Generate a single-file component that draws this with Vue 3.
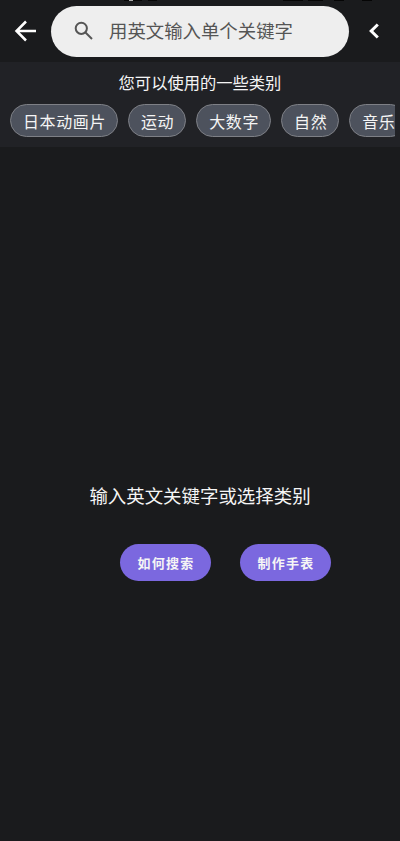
<script setup>
const categories = ['日本动画片', '运动', '大数字', '自然', '音乐']
</script>

<template>
  <div class="screen">
    <header class="topbar">
      <svg class="status-edge" width="400" height="2" viewBox="0 0 400 2">
        <path class="dark" d="M124 .5h18M148 .5h9M283 .5h20M308 .5h15M334 .5h10M362 .5h10" />
        <path class="light" d="M129 .5h4" />
      </svg>
      <button class="icon-btn back" aria-label="返回">
        <svg width="24" height="24" viewBox="0 0 24 24"><path d="M22 12H3M12 2.5L2.500 12l9.500 9.500" /></svg>
      </button>
      <div class="search">
        <svg width="20" height="20" viewBox="0 0 20 20"><circle cx="7.300" cy="7.300" r="5.600" /><path d="M11.500 11.500l6.500 6.500" /></svg>
        <span>用英文输入单个关键字</span>
      </div>
      <button class="icon-btn more" aria-label="展开">
        <svg width="12" height="18" viewBox="0 0 12 18"><path d="M9.800 2.500L3.200 9l6.600 6.500" /></svg>
      </button>
    </header>
    <section class="categories">
      <h2>您可以使用的一些类别</h2>
      <div class="chips">
        <button v-for="c in categories" :key="c" class="chip">{{ c }}</button>
      </div>
    </section>
    <main class="empty">
      <p>输入英文关键字或选择类别</p>
      <div class="actions">
        <button>如何搜索</button>
        <button>制作手表</button>
      </div>
    </main>
  </div>
</template>

<style>
body {
  background: #1a1b1d;
}
</style>

<style scoped>
.screen {
  width: 400px;
  height: 841px;
  overflow: hidden;
  display: flex;
  flex-direction: column;
  background: #1a1b1d;
  color: #f5f5f5;
  font-family: "Noto Sans CJK SC", sans-serif;
}
button {
  font: inherit;
  color: inherit;
  border: 0;
  margin: 0;
  padding: 0;
  background: none;
  white-space: nowrap;
  flex: none;
}
svg {
  display: block;
  flex: none;
  fill: none;
  stroke: currentColor;
}
.topbar {
  position: relative;
  height: 62px;
  flex: none;
  display: flex;
  align-items: center;
}
/* Lower edge of the system status bar, showing above the app bar */
.status-edge {
  position: absolute;
  top: 0;
  left: 0;
}
.dark {
  stroke: #050505;
}
.light {
  stroke: #aaa;
}
.icon-btn {
  display: flex;
  justify-content: center;
  color: #fff;
}
.back {
  width: 51px;
  stroke-width: 2.5;
}
.more {
  width: 49px;
  stroke-width: 3;
}
.search {
  width: 298px;
  height: 51px;
  box-sizing: border-box;
  padding-left: 23px;
  display: flex;
  align-items: center;
  gap: 15px;
  border-radius: 26px;
  background: #eee;
  color: #555;
}
.search svg {
  stroke-width: 2;
}
.search span {
  font-size: 18.400px;
  line-height: 28px;
  padding-bottom: 2px;
}
.categories {
  height: 85px;
  flex: none;
  box-sizing: border-box;
  padding: 8px 5px 0 10px;
  background: #212226;
}
h2 {
  margin: 0;
  padding-right: 5px;
  font-size: 16.300px;
  font-weight: 400;
  line-height: 24px;
  text-align: center;
}
.chips {
  display: flex;
  gap: 10px;
  margin-top: 10px;
  overflow: hidden;
}
.chip {
  height: 33px;
  box-sizing: border-box;
  padding: 1px 11px 0 12px;
  border: 1px solid #7e8086;
  border-radius: 17px;
  background: #4d525d;
  font-size: 16px;
  letter-spacing: 0.600px;
  line-height: 30px;
}
.empty {
  display: flex;
  flex-direction: column;
  align-items: center;
  padding-top: 334px;
}
p {
  margin: 0;
  font-size: 18.450px;
  line-height: 28px;
}
.actions {
  display: flex;
  gap: 29px;
  margin: 35px 0 0 51px;
}
.actions button {
  width: 91px;
  height: 37px;
  border-radius: 19px;
  background: #7b68df;
  font-size: 13px;
  font-weight: 700;
  letter-spacing: 1.300px;
  padding-left: 1px;
}
</style>
